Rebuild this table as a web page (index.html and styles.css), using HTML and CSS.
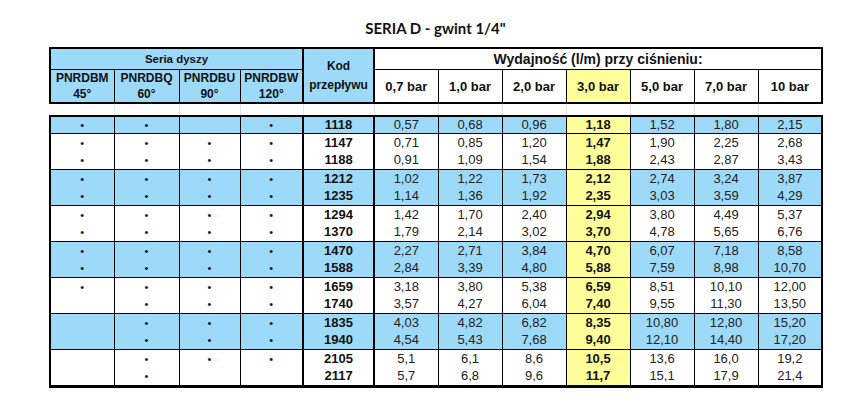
FILE: index.html
```html
<!DOCTYPE html>
<html lang="pl">
<head>
<meta charset="utf-8">
<title>SERIA D - gwint 1/4"</title>
<link rel="stylesheet" href="styles.css">
</head>
<body>
<div class="page">
  <h1 class="title">SERIA D - gwint 1/4"</h1>
  <table class="tbl">
    <colgroup>
      <col class="c64"><col class="c65"><col class="c61"><col class="c63"><col class="c71">
      <col class="c64"><col class="c64"><col class="c64"><col class="c64"><col class="c64"><col class="c64"><col class="c64">
    </colgroup>
    <thead>
      <tr class="hr1">
        <th colspan="4" class="seria first">Seria dyszy</th>
        <th rowspan="2" class="kod">Kod<br>przepływu</th>
        <th colspan="7" class="wyd last">Wydajność (l/m) przy ciśnieniu:</th>
      </tr>
      <tr class="hr2">
        <th class="blue first">PNRDBM<br>45°</th>
        <th class="blue">PNRDBQ<br>60°</th>
        <th class="blue">PNRDBU<br>90°</th>
        <th class="blue">PNRDBW<br>120°</th>
        <th class="bar">0,7 bar</th>
        <th class="bar">1,0 bar</th>
        <th class="bar">2,0 bar</th>
        <th class="bar y">3,0 bar</th>
        <th class="bar">5,0 bar</th>
        <th class="bar">7,0 bar</th>
        <th class="bar last">10 bar</th>
      </tr>
    </thead>
    <tbody>
      <tr class="gap"><td class="first"></td><td></td><td></td><td></td><td></td><td></td><td></td><td></td><td></td><td></td><td></td><td class="last"></td></tr>

      <tr class="row top blue short">
        <td class="dot first">•</td><td class="dot">•</td><td class="dot"></td><td class="dot">•</td><td class="kod">1118</td>
        <td>0,57</td><td>0,68</td><td>0,96</td><td class="y">1,18</td><td>1,52</td><td>1,80</td><td class="last">2,15</td>
      </tr>

      <tr class="row grp">
        <td class="dot first">•</td><td class="dot">•</td><td class="dot">•</td><td class="dot">•</td><td class="kod">1147</td>
        <td>0,71</td><td>0,85</td><td>1,20</td><td class="y">1,47</td><td>1,90</td><td>2,25</td><td class="last">2,68</td>
      </tr>
      <tr class="row">
        <td class="dot first">•</td><td class="dot">•</td><td class="dot">•</td><td class="dot">•</td><td class="kod">1188</td>
        <td>0,91</td><td>1,09</td><td>1,54</td><td class="y">1,88</td><td>2,43</td><td>2,87</td><td class="last">3,43</td>
      </tr>

      <tr class="row grp blue">
        <td class="dot first">•</td><td class="dot">•</td><td class="dot">•</td><td class="dot">•</td><td class="kod">1212</td>
        <td>1,02</td><td>1,22</td><td>1,73</td><td class="y">2,12</td><td>2,74</td><td>3,24</td><td class="last">3,87</td>
      </tr>
      <tr class="row blue">
        <td class="dot first">•</td><td class="dot">•</td><td class="dot">•</td><td class="dot">•</td><td class="kod">1235</td>
        <td>1,14</td><td>1,36</td><td>1,92</td><td class="y">2,35</td><td>3,03</td><td>3,59</td><td class="last">4,29</td>
      </tr>

      <tr class="row grp">
        <td class="dot first">•</td><td class="dot">•</td><td class="dot">•</td><td class="dot">•</td><td class="kod">1294</td>
        <td>1,42</td><td>1,70</td><td>2,40</td><td class="y">2,94</td><td>3,80</td><td>4,49</td><td class="last">5,37</td>
      </tr>
      <tr class="row">
        <td class="dot first">•</td><td class="dot">•</td><td class="dot">•</td><td class="dot">•</td><td class="kod">1370</td>
        <td>1,79</td><td>2,14</td><td>3,02</td><td class="y">3,70</td><td>4,78</td><td>5,65</td><td class="last">6,76</td>
      </tr>

      <tr class="row grp blue">
        <td class="dot first">•</td><td class="dot">•</td><td class="dot">•</td><td class="dot">•</td><td class="kod">1470</td>
        <td>2,27</td><td>2,71</td><td>3,84</td><td class="y">4,70</td><td>6,07</td><td>7,18</td><td class="last">8,58</td>
      </tr>
      <tr class="row blue">
        <td class="dot first">•</td><td class="dot">•</td><td class="dot">•</td><td class="dot">•</td><td class="kod">1588</td>
        <td>2,84</td><td>3,39</td><td>4,80</td><td class="y">5,88</td><td>7,59</td><td>8,98</td><td class="last">10,70</td>
      </tr>

      <tr class="row grp">
        <td class="dot first">•</td><td class="dot">•</td><td class="dot">•</td><td class="dot">•</td><td class="kod">1659</td>
        <td>3,18</td><td>3,80</td><td>5,38</td><td class="y">6,59</td><td>8,51</td><td>10,10</td><td class="last">12,00</td>
      </tr>
      <tr class="row">
        <td class="dot first"></td><td class="dot">•</td><td class="dot">•</td><td class="dot">•</td><td class="kod">1740</td>
        <td>3,57</td><td>4,27</td><td>6,04</td><td class="y">7,40</td><td>9,55</td><td>11,30</td><td class="last">13,50</td>
      </tr>

      <tr class="row grp blue">
        <td class="dot first"></td><td class="dot">•</td><td class="dot">•</td><td class="dot">•</td><td class="kod">1835</td>
        <td>4,03</td><td>4,82</td><td>6,82</td><td class="y">8,35</td><td>10,80</td><td>12,80</td><td class="last">15,20</td>
      </tr>
      <tr class="row blue">
        <td class="dot first"></td><td class="dot">•</td><td class="dot">•</td><td class="dot">•</td><td class="kod">1940</td>
        <td>4,54</td><td>5,43</td><td>7,68</td><td class="y">9,40</td><td>12,10</td><td>14,40</td><td class="last">17,20</td>
      </tr>

      <tr class="row grp">
        <td class="dot first"></td><td class="dot">•</td><td class="dot">•</td><td class="dot">•</td><td class="kod">2105</td>
        <td>5,1</td><td>6,1</td><td>8,6</td><td class="y">10,5</td><td>13,6</td><td>16,0</td><td class="last">19,2</td>
      </tr>
      <tr class="row bottom">
        <td class="dot first"></td><td class="dot">•</td><td class="dot"></td><td class="dot"></td><td class="kod">2117</td>
        <td>5,7</td><td>6,8</td><td>9,6</td><td class="y">11,7</td><td>15,1</td><td>17,9</td><td class="last">21,4</td>
      </tr>
    </tbody>
  </table>
</div>
</body>
</html>
```

FILE: styles.css
```css
html, body {
  margin: 0;
  padding: 0;
  background: #ffffff;
}

.page {
  padding: 0 0 0 49px;
  width: 773px;
  font-family: "Liberation Sans", Arial, sans-serif;
  color: #1c1c1c;
}

.title {
  margin: 0;
  height: 47px;
  box-sizing: border-box;
  padding-top: 19px;
  font-family: Lato, "Open Sans", sans-serif;
  font-weight: 700;
  font-size: 15px;
  line-height: 18px;
  text-align: center;
  color: #111;
}

.tbl {
  border-collapse: collapse;
  table-layout: fixed;
  width: 773px;
}

.c64 { width: 64px; }
.c65 { width: 65px; }
.c61 { width: 61px; }
.c63 { width: 63px; }
.c71 { width: 71px; }

/* header */
.tbl th {
  padding: 0;
  border: 1px solid #000;
  font-weight: 700;
  text-align: center;
  vertical-align: middle;
  color: #111;
}

.hr1 th {
  border-top: 2px solid #000;
  height: 20px;
}

.hr2 th {
  border-bottom: 2px solid #000;
  height: 31px;
}

.tbl th.first { border-left: 2px solid #000; }
.tbl th.last { border-right: 2px solid #000; }

.seria {
  background: #9dd9f8;
  font-size: 11.5px;
}

.tbl th.kod {
  background: #9dd9f8;
  font-size: 12px;
  line-height: 19px;
  border-left: 2px solid #000;
  border-right: 2px solid #000;
  border-bottom: 2px solid #000;
}

.wyd {
  background: #fff;
  font-size: 14px;
}

.hr2 th.blue {
  background: #9dd9f8;
  font-size: 12px;
  line-height: 16px;
}

.hr2 th.bar {
  background: #fff;
  font-size: 13px;
}

.hr2 th.y { background: #ffff99; }

/* gap row */
.gap td {
  height: 11px;
  padding: 0;
  border-left: 1px solid #e4e4e4;
  border-right: 1px solid #e4e4e4;
}
.gap td.first { border-left: 0; }
.gap td.last { border-right: 0; }

/* body */
.row td {
  padding: 0;
  height: 17.5px;
  font-size: 13px;
  line-height: 16px;
  text-align: center;
  vertical-align: middle;
  border-left: 1px solid #000;
  border-right: 1px solid #000;
  color: #222;
}

.row.short td { height: 15px; }

.row.top td { border-top: 2px solid #000; }
.row.grp td { border-top: 1px solid #000; }
.row.bottom td { border-bottom: 3px solid #000; }

.row td.first { border-left: 2px solid #000; }
.row td.last { border-right: 2px solid #000; }

.row td.kod {
  font-weight: 700;
  border-left: 2px solid #000;
  border-right: 2px solid #000;
  color: #111;
}

.row td.dot {
  font-size: 11px;
  color: #111;
}

.row.blue td { background: #9dd9f8; }

.row td.y {
  background: #ffff99;
  font-weight: 700;
  color: #111;
}
```
